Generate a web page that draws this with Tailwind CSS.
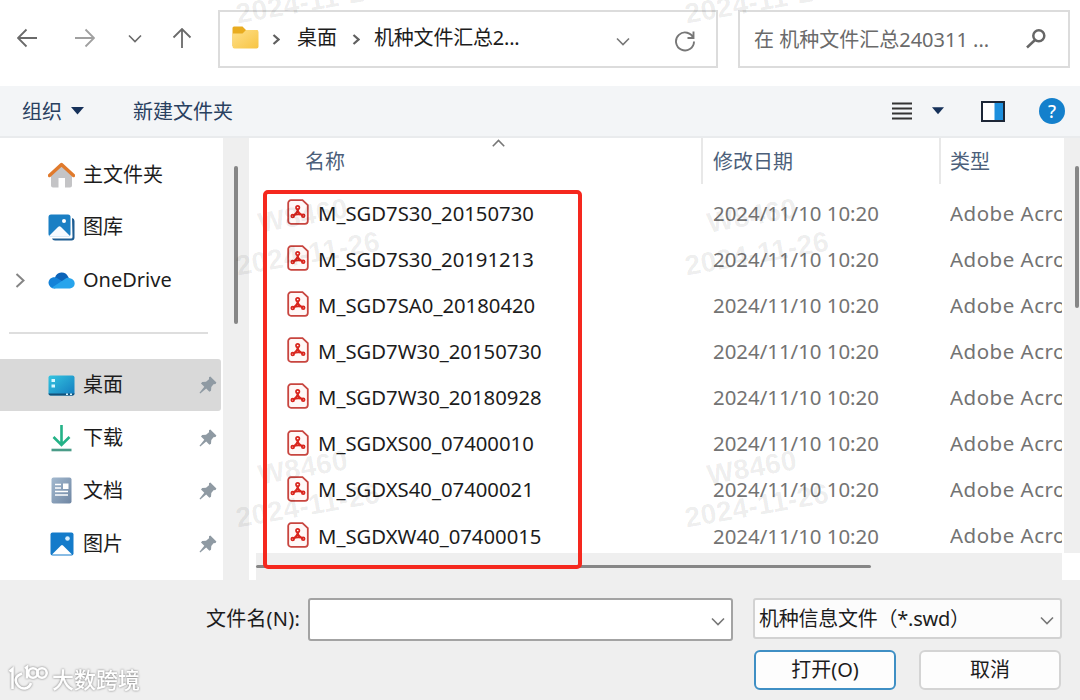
<!DOCTYPE html>
<html lang="zh-CN">
<head>
    <meta charset="UTF-8">
    <meta name="viewport" content="width=device-width, initial-scale=1.0">
    <title>打开</title>
    <script src="https://cdn.jsdelivr.net/npm/@tailwindcss/browser@4"></script>
    <style>
        body {
            font-family: 'Noto Sans', 'Noto Sans CJK SC', sans-serif;
        }
    </style>
</head>
<body class="relative w-[1080px] h-[700px] overflow-hidden bg-[#efefef] text-[20px] leading-none text-[#1c1c1c]">

    <!-- Shared icons -->
    <svg class="hidden">
        <symbol id="pdf" viewBox="0 0 22 26">
            <path d="M4 1.2h11.5l5.3 5V22a2.8 2.8 0 0 1-2.8 2.8H4A2.8 2.8 0 0 1 1.200 22V4A2.800 2.800 0 0 1 4 1.200z" fill="#fff8f7" stroke="#c8453f" stroke-width="1.8"/>
            <path d="M10.700 9.500C11 13 8.500 15.500 5.800 16.800M10.700 9.500C10.600 13 13 15.500 16.300 16.300M6 16.800C9 15 13 15 16.300 16.300" fill="none" stroke="#d9251d" stroke-width="2"/>
            <circle cx="10.700" cy="8.600" r="1.700" fill="none" stroke="#d9251d" stroke-width="1.700"/>
            <circle cx="5.700" cy="17" r="1.400" fill="none" stroke="#d9251d" stroke-width="1.700"/>
            <circle cx="16.200" cy="16.700" r="1.400" fill="none" stroke="#d9251d" stroke-width="1.700"/>
        </symbol>
        <symbol id="pin" viewBox="0 0 18 18">
            <path d="M11.300.6 17.400 6.500 16.500 8 14.500 8.300 12.300 11 12 14.800 10.400 15.800 7.200 12.600 1.300 17.500.5 16.700 5.300 10.800 2 7.500 3.200 6 7 5.700 10 3.300 10 1.300z" fill="#8f9aa3"/>
        </symbol>
        <symbol id="down" viewBox="0 0 14 9">
            <path d="M1 1.500 7 7.500 13 1.500" fill="none" stroke="currentColor" stroke-width="1.600"/>
        </symbol>
    </svg>

    <!-- Address bar -->
    <header class="flex h-[86px] bg-white">
        <div class="flex h-[76px] w-[218px] shrink-0 items-center pl-[17px] text-[#6a6a6a]">
            <svg class="h-5 w-5" viewBox="0 0 20 20" fill="none" stroke="currentColor" stroke-width="1.800"><path d="M20 10H1M9.500 1.500 1 10l8.500 8.500"/></svg>
            <svg class="ml-[38px] h-5 w-5 text-[#a0a0a0]" viewBox="0 0 20 20" fill="none" stroke="currentColor" stroke-width="1.800"><path d="M0 10h19M10.500 1.500 19 10l-8.500 8.500"/></svg>
            <svg class="ml-[33px] h-[9px] w-[14px]"><use href="#down"/></svg>
            <svg class="ml-[30px] h-5 w-5" viewBox="0 0 20 20" fill="none" stroke="currentColor" stroke-width="1.800"><path d="M10 20V1M1.500 9.500 10 1l8.500 8.500"/></svg>
        </div>
        <div class="mt-[10px] flex h-[58px] w-[500px] shrink-0 items-center border-2 border-[#dcdcdc] pl-[12px]">
            <svg class="h-[23px] w-[27px] -translate-y-[2px]" viewBox="0 0 27 23">
                <defs><linearGradient id="folder" x2="1" y2="1"><stop stop-color="#ffe08a"/><stop offset="1" stop-color="#f7c443"/></linearGradient></defs>
                <path d="M2 .5h8.500L14 4h10.500Q26 4 26 6v14H.5V2Q.5.5 2 .5z" fill="#e9ac20"/>
                <path d="M.5 7.500h10L14 4h10.500Q26.500 4 26.500 6v14.500q0 2-2 2h-22q-2 0-2-2z" fill="url(#folder)"/>
            </svg>
            <svg class="ml-[13px] h-[11px] w-[8px]" viewBox="0 0 8 11" fill="none" stroke="#606060" stroke-width="2.200"><path d="M1.500 1 6.500 5.500l-5 4.500"/></svg>
            <span class="ml-[17px] -translate-y-px whitespace-nowrap">桌面</span>
            <svg class="ml-[15px] h-[11px] w-[8px]" viewBox="0 0 8 11" fill="none" stroke="#606060" stroke-width="2.200"><path d="M1.500 1 6.500 5.500l-5 4.500"/></svg>
            <span class="ml-[14px] w-[242px] -translate-y-px whitespace-nowrap tracking-[-0.200px]">机种文件汇总2...</span>
            <svg class="mt-[5px] h-[9px] w-[14px] text-[#777]"><use href="#down"/></svg>
            <svg class="ml-[44px] mt-[3px] h-[22px] w-[22px]" viewBox="0 0 22 22" fill="none" stroke="#777" stroke-width="1.900"><path d="M19.500 8.500A9 9 0 1 0 20 11.500M19.500 1.500v6.500h-6"/></svg>
        </div>
        <div class="ml-[20px] mt-[10px] flex h-[58px] w-[332px] shrink-0 items-center border-2 border-[#dcdcdc] pl-[14px] text-[#6a6a6a]">
            <span class="w-[254px] translate-y-px whitespace-pre">在 机种文件汇总240311 ...</span>
            <svg class="ml-[18px] h-5 w-5" viewBox="0 0 20 20" fill="none" stroke="#666" stroke-width="2.500"><circle cx="12.800" cy="6.800" r="5.500"/><path d="M9 11 1 18.500"/></svg>
        </div>
    </header>

    <!-- Command bar -->
    <nav class="flex h-[52px] items-center border-b-2 border-[#e9ebed] bg-[#f3f5f7] pl-[22px] text-[#28405f]">
        <span class="translate-y-px">组织</span>
        <svg class="ml-[9px] h-[8px] w-[13px]" viewBox="0 0 13 8"><path d="M0 0h13L6.500 7.500z" fill="#16315a"/></svg>
        <span class="ml-[49px] translate-y-px">新建文件夹</span>
        <svg class="ml-[659px] h-[18px] w-[20px]" viewBox="0 0 20 18"><path d="M0 1.500h20M0 6.500h20M0 11.500h20M0 16.500h20" stroke="#333" stroke-width="2"/></svg>
        <svg class="ml-[20px] h-[8px] w-[12px]" viewBox="0 0 13 8"><path d="M0 0h13L6.500 7.500z" fill="#16315a"/></svg>
        <svg class="ml-[37px] h-[21px] w-[24px]" viewBox="0 0 24 21">
            <path d="M1 1h22v19H1z" fill="#fff"/><path d="M13.500 1h9.500v19h-9.500z" fill="#1d8fdd"/><path d="M1 1h22v19H1z" fill="none" stroke="#1c2636" stroke-width="2"/>
        </svg>
        <span class="ml-[34px] flex h-[26px] w-[26px] items-center justify-center rounded-full bg-[#1480cc] text-[18px] font-medium text-white">?</span>
    </nav>

    <main class="flex h-[442px]">
        <!-- Navigation pane -->
        <aside class="flex w-[223px] shrink-0 flex-col bg-white pt-[10px]">
            <div class="flex h-[53px] items-center pl-[48px]">
                <svg class="h-[26px] w-[27px]" viewBox="0 0 27 26">
                    <path d="M3 11 13.500 2 24 11v12.500q0 2-2 2h-5V16h-6.500v9.500h-5.500q-2 0-2-2z" fill="#c4c4c6"/>
                    <path d="M1.500 13.500 13.500 2.500l12 11" fill="none" stroke="#e07a2c" stroke-width="3.400" stroke-linejoin="round" stroke-linecap="round"/>
                </svg>
                <span class="ml-[8px]">主文件夹</span>
            </div>
            <div class="flex h-[53px] items-center pl-[48px]">
                <svg class="h-[27px] w-[27px]" viewBox="0 0 27 27">
                    <path d="M24 4q2.500.5 2.500 3v16.500q0 3-3 3H7q-2.500 0-3-2h19q1.500 0 1.500-1.500z" fill="#1c5c92"/>
                    <rect x=".5" y=".5" width="22" height="22" rx="2.500" fill="#1a7fc4"/>
                    <path d="M1 22 10 13q1.500-1.500 3 0l9 9q-1 .8-2 .8H3q-1 0-2-.8z" fill="#f5faff"/>
                    <circle cx="16" cy="7" r="2" fill="#fff"/>
                </svg>
                <span class="ml-[8px] -translate-y-px">图库</span>
            </div>
            <div class="flex h-[53px] items-center pl-[15px]">
                <svg class="h-[15px] w-[10px]" viewBox="0 0 10 15" fill="none" stroke="#858585" stroke-width="2"><path d="M1.500 1 8.500 7.500l-7 6.500"/></svg>
                <svg class="ml-[23px] h-[18px] w-[27px] -translate-y-px" viewBox="0 0 27 18">
                    <path d="M7 6.500A7 7 0 0 1 20 5.500L24 13H5z" fill="#0c63b8"/>
                    <path d="M6.500 17.500A6 6 0 0 1 .5 12C.5 8 4 5.500 8 6.500L19 13z" fill="#1482d8"/>
                    <path d="M4 16.500 17 8Q19 6 22 7.200 26.700 8.500 26.700 12.500T22 17.500H6.500z" fill="#27a4ec"/>
                </svg>
                <span class="ml-[8px] -translate-y-px text-[20px]">OneDrive</span>
            </div>
            <div class="mx-[9px] mt-[25px] h-[2px] w-[199px] bg-[#dedede]"></div>
            <div class="mt-[25px] flex h-[52px] w-[221px] items-center rounded-r-[3px] bg-[#d9d9d9] pl-[48px]">
                <svg class="h-[21px] w-[27px]" viewBox="0 0 27 21">
                    <defs><linearGradient id="desk" x2="1" y2="1"><stop stop-color="#34c5e0"/><stop offset="1" stop-color="#137bbf"/></linearGradient></defs>
                    <rect x=".5" y=".5" width="26" height="20" rx="2" fill="url(#desk)"/>
                    <path d="M.5 18.500h26q0 2-2 2h-22q-2 0-2-2z" fill="#145078"/>
                    <path d="M3.500 4h3.500v3H3.500zM3.500 9.500h3.500v3H3.500zM18 18.500h2v1.500h-2zM22 18.500h2v1.500h-2z" fill="#d8f7ff"/>
                </svg>
                <span class="ml-[8px] w-[116px]">桌面</span>
                <svg class="h-[18px] w-[18px]"><use href="#pin"/></svg>
            </div>
            <div class="flex h-[53px] items-center pl-[51px]">
                <svg class="h-[28px] w-[21px]" viewBox="0 0 21 28" fill="none" stroke-width="2.600"><path d="M10.500 1v19M2.500 13l8 8 8-8" stroke="#24b287"/><path d="M.5 26h20" stroke="#4a9c88"/></svg>
                <span class="ml-[11px] w-[116px]">下载</span>
                <svg class="h-[18px] w-[18px]"><use href="#pin"/></svg>
            </div>
            <div class="flex h-[53px] items-center pl-[51px]">
                <svg class="h-[27px] w-[21px]" viewBox="0 0 21 27">
                    <defs><linearGradient id="doc" x2="1" y2="1"><stop stop-color="#a3b9cf"/><stop offset="1" stop-color="#6f86a3"/></linearGradient></defs>
                    <rect x=".5" y=".5" width="20" height="26" rx="2" fill="url(#doc)"/>
                    <path d="M4 7.500h6M4 11h6M4 14.500h13M4 18h13" stroke="#fff" stroke-width="1.400"/><path d="M12 6.500h5.500v5.500H12z" fill="#fff"/>
                </svg>
                <span class="ml-[11px] w-[116px]">文档</span>
                <svg class="h-[18px] w-[18px]"><use href="#pin"/></svg>
            </div>
            <div class="flex h-[53px] items-center pl-[50px]">
                <svg class="h-[24px] w-[24px]" viewBox="0 0 24 24">
                    <rect x=".5" y=".5" width="23" height="23" rx="2" fill="#147bca"/>
                    <path d="M2 22.500 11 13.500q1-1 2 0l9 9z" fill="#fff"/><circle cx="17.500" cy="6.500" r="2.300" fill="#d7efff"/>
                </svg>
                <span class="ml-[9px] w-[116px]">图片</span>
                <svg class="h-[18px] w-[18px]"><use href="#pin"/></svg>
            </div>
        </aside>
        <div class="w-[26px] shrink-0 pl-[11px] pt-[28px]">
            <div class="h-[158px] w-[4px] rounded-full bg-[#868686]"></div>
        </div>

        <!-- File list -->
        <section class="flex w-[831px] shrink-0 flex-col bg-white">
            <div class="flex h-[415px] shrink-0">
                <div class="w-[815px] overflow-hidden">
                    <div class="flex h-[52px] text-[#4c5f7a]">
                        <div class="flex h-[46px] w-[454px] shrink-0 items-center border-r-2 border-[#e8e8e8] pl-[56px]">
                            <span class="w-[187px] translate-y-px">名称</span>
                            <svg class="h-[8px] w-[13px] -translate-y-[18px]" viewBox="0 0 13 8"><path d="M.8 7.200 6.500 1.500l5.700 5.700" fill="none" stroke="#777" stroke-width="1.600"/></svg>
                        </div>
                        <div class="flex h-[46px] w-[238px] shrink-0 items-center border-r-2 border-[#e8e8e8] pl-[10px]"><span class="translate-y-px">修改日期</span></div>
                        <div class="flex h-[46px] items-center pl-[9px]"><span class="translate-y-px">类型</span></div>
                    </div>
                    <div id="files"></div>
                </div>
                <div class="flex w-[16px] justify-end bg-[#efefef] pr-px pt-[28px]">
                    <div class="h-[142px] w-[4px] rounded-full bg-[#868686]"></div>
                </div>
            </div>
            <div class="ml-[7px] h-[27px] w-[806px] bg-[#efefef] pt-[12px]">
                <div class="h-[3px] w-[615px] rounded-full bg-[#868686]"></div>
            </div>
        </section>
    </main>

    <!-- File name and buttons -->
    <footer class="h-[120px]">
        <div class="flex items-start pl-[206px] pt-[18px]">
            <label class="mt-[11px] w-[102px] whitespace-nowrap tracking-[0.200px]">文件名(N):</label>
            <div class="flex h-[43px] w-[425px] items-center justify-end rounded-[3px] border-2 border-[#a3a3a3] bg-white pr-[6px] text-[#777]">
                <svg class="mt-[3px] h-[9px] w-[14px]"><use href="#down"/></svg>
            </div>
            <div class="ml-[20px] flex h-[41px] w-[309px] items-center justify-between rounded-[3px] border-2 border-[#d2d2d2] bg-[#fcfcfc] pl-[4px] pr-[6px]">
                <span class="whitespace-nowrap tracking-[-0.250px]">机种信息文件（*.swd）</span>
                <svg class="mt-[3px] h-[9px] w-[14px] text-[#777]"><use href="#down"/></svg>
            </div>
        </div>
        <div class="flex pl-[754px] pt-[9px]">
            <button class="flex h-[40px] w-[142px] items-center justify-center rounded-[6px] border-2 border-[#3f8fc4] bg-[#fdfdfd]">打开(O)</button>
            <button class="ml-[23px] flex h-[40px] w-[142px] items-center justify-center rounded-[6px] border-2 border-[#d4d4d4] bg-[#fdfdfd]">取消</button>
        </div>
    </footer>

    <!-- Watermarks -->
    <div class="pointer-events-none absolute inset-0 font-['Liberation_Sans'] text-[28px] font-bold text-black/8">
        <span class="absolute left-[308px] top-[2px] -translate-1/2 -rotate-10 whitespace-nowrap tracking-[0.400px]">2024-11-26</span>
        <span class="absolute left-[757px] top-[2px] -translate-1/2 -rotate-10 whitespace-nowrap tracking-[0.400px]">2024-11-26</span>
        <span class="absolute left-[303px] top-[216px] -translate-1/2 -rotate-10 whitespace-nowrap tracking-[0.400px]">W8460</span>
        <span class="absolute left-[752px] top-[216px] -translate-1/2 -rotate-10 whitespace-nowrap tracking-[0.400px]">W8460</span>
        <span class="absolute left-[308px] top-[254px] -translate-1/2 -rotate-10 whitespace-nowrap tracking-[0.400px]">2024-11-26</span>
        <span class="absolute left-[757px] top-[254px] -translate-1/2 -rotate-10 whitespace-nowrap tracking-[0.400px]">2024-11-26</span>
        <span class="absolute left-[303px] top-[468px] -translate-1/2 -rotate-10 whitespace-nowrap tracking-[0.400px]">W8460</span>
        <span class="absolute left-[752px] top-[468px] -translate-1/2 -rotate-10 whitespace-nowrap tracking-[0.400px]">W8460</span>
        <span class="absolute left-[308px] top-[506px] -translate-1/2 -rotate-10 whitespace-nowrap tracking-[0.400px]">2024-11-26</span>
        <span class="absolute left-[757px] top-[506px] -translate-1/2 -rotate-10 whitespace-nowrap tracking-[0.400px]">2024-11-26</span>
    </div>

    <!-- Red highlight around the names -->
    <div class="absolute left-[263px] top-[190px] h-[379px] w-[319px] rounded-[5px] border-4 border-[#f5281e]"></div>

    <!-- Site logo -->
    <div class="absolute left-[8px] top-[665px] flex items-center text-white drop-shadow-[0_0_1px_#777]">
        <svg class="h-[28px] w-[40px]" viewBox="0 0 40 28" fill="none" stroke="#fff" stroke-width="2.600">
            <path d="M1.500 6.500 4.500 4v20M14 8.500C7 11 6 16 10 20.500c4 4.500 11 4 13-2.500M17 3.500 19 2v11.500"/>
            <circle cx="25" cy="8" r="4.700"/><circle cx="34" cy="8" r="4.700"/>
        </svg>
        <span class="ml-[4px] text-[22px] font-medium">大数跨境</span>
    </div>

    <script>
        const files = [
            'M_SGD7S30_20150730',
            'M_SGD7S30_20191213',
            'M_SGD7SA0_20180420',
            'M_SGD7W30_20150730',
            'M_SGD7W30_20180928',
            'M_SGDXS00_07400010',
            'M_SGDXS40_07400021',
            'M_SGDXW40_07400015'
        ];

        document.getElementById('files').innerHTML = files.map(name => `
            <div class="flex h-[46.1px] items-center whitespace-nowrap text-[20.500px] text-[#737373]">
                <svg class="ml-[38px] h-[26px] w-[22px] shrink-0 -translate-y-px"><use href="#pdf"/></svg>
                <span class="ml-[9px] w-[395px] shrink-0 text-[20.300px] text-[#1c1c1c]">${name}</span>
                <span class="w-[237px] shrink-0 text-[20.400px]">2024/11/10 10:20</span>
                <span class="w-[112px] shrink-0 overflow-hidden py-1 tracking-[0.500px]">Adobe Acro</span>
            </div>`).join('');
    </script>
</body>
</html>
